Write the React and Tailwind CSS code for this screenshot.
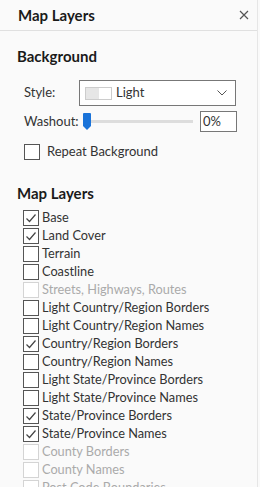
import { useState } from "react";

const layers = [
  { name: "Base", checked: true },
  { name: "Land Cover", checked: true },
  { name: "Terrain" },
  { name: "Coastline" },
  { name: "Streets, Highways, Routes", disabled: true },
  { name: "Light Country/Region Borders" },
  { name: "Light Country/Region Names" },
  { name: "Country/Region Borders", checked: true },
  { name: "Country/Region Names" },
  { name: "Light State/Province Borders" },
  { name: "Light State/Province Names" },
  { name: "State/Province Borders", checked: true },
  { name: "State/Province Names", checked: true },
  { name: "County Borders", disabled: true },
  { name: "County Names", disabled: true },
  { name: "Post Code Boundaries", disabled: true },
];

function Box({ checked, disabled }) {
  return (
    <span
      className={
        "flex h-[16px] w-[16px] shrink-0 items-center justify-center border bg-white " +
        (disabled ? "border-[#d4d4d4]" : "border-[#555]")
      }
    >
      {checked && (
        <svg width="12" height="12" viewBox="0 0 12 12">
          <path d="M1.5 6.5 L4.5 9.5 L10.5 2.5" fill="none" stroke="#444" strokeWidth="1.2" />
        </svg>
      )}
    </span>
  );
}

export default function App() {
  const [items, setItems] = useState(layers);

  const toggle = (i) =>
    setItems(items.map((it, idx) => (idx === i && !it.disabled ? { ...it, checked: !it.checked } : it)));

  return (
    <div className="h-[487px] w-[260px] overflow-hidden bg-[#fafafa] font-['Lato',sans-serif] text-[#333]">
      <div className="h-full w-[258px] border-r border-[#e6e6e6]">
        <div className="flex h-[31px] items-center justify-between border-b border-[#e0e0e0] pl-[18px] pr-[8px]">
          <span className="text-[15px] font-bold text-[#1a1a1a]">Map Layers</span>
          <svg width="10" height="10" viewBox="0 0 10 10">
            <path d="M1 1 L9 9 M9 1 L1 9" stroke="#555" strokeWidth="1.2" />
          </svg>
        </div>

        <div className="px-[17px] pt-[14px]">
          <h2 className="text-[15px] font-bold leading-[22px] text-[#1a1a1a]">Background</h2>

          <div className="mt-[13px] flex items-center pl-[7px]">
            <span className="w-[55px] text-[13px]">Style:</span>
            <div className="flex h-[26px] w-[157px] items-center border border-[#777] bg-white pl-[5px] pr-[8px]">
              <span className="flex h-[13px] w-[27px] border border-[#ccc]">
                <span className="w-1/2 bg-[#e6e6e6]" />
                <span className="w-1/2 bg-white" />
              </span>
              <span className="ml-[4px] flex-1 text-[13px] text-[#333]">Light</span>
              <svg width="10" height="6" viewBox="0 0 10 6">
                <path d="M0.5 0.5 L5 5 L9.5 0.5" fill="none" stroke="#555" strokeWidth="1" />
              </svg>
            </div>
          </div>

          <div className="mt-[5px] flex items-center pl-[7px]">
            <span className="w-[59px] text-[13px]">Washout:</span>
            <div className="relative flex h-[18px] w-[110px] items-center">
              <div className="h-[3px] w-full bg-[#ddd]" />
              <svg className="absolute left-0 top-0" width="8" height="17" viewBox="0 0 8 17">
                <path d="M1 0 H7 Q8 0 8 1 V13 L4 17 L0 13 V1 Q0 0 1 0 Z" fill="#1a73d9" />
              </svg>
            </div>
            <div className="ml-[7px] flex h-[21px] w-[37px] items-center border border-[#777] bg-white pl-[2px] text-[13px]">
              0%
            </div>
          </div>

          <label className="mt-[10px] flex items-center gap-[7px] pl-[7px]">
            <Box />
            <span className="text-[13px]">Repeat Background</span>
          </label>

          <h2 className="mt-[20px] text-[15px] font-bold leading-[22px] text-[#1a1a1a]">Map Layers</h2>

          <div className="mt-[5px] flex flex-col pl-[6px]">
            {items.map((it, i) => (
              <label
                key={it.name}
                onClick={() => toggle(i)}
                className="flex h-[18px] items-center gap-[3px]"
              >
                <Box checked={it.checked} disabled={it.disabled} />
                <span className={"text-[12.75px] " + (it.disabled ? "text-[#aaa]" : "text-[#333]")}>{it.name}</span>
              </label>
            ))}
          </div>
        </div>
      </div>
    </div>
  );
}
